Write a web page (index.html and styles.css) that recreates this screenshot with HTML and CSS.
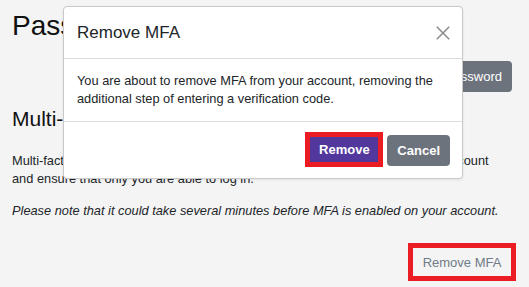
FILE: index.html
```html
<!DOCTYPE html>
<html lang="en">
<head>
<meta charset="utf-8">
<title>Remove MFA</title>
<link rel="stylesheet" href="styles.css">
</head>
<body>
<main class="page">
  <h2 class="page-title">Password</h2>
  <div class="row-end">
    <button class="btn btn-gray btn-regular" type="button">Change Password</button>
  </div>
  <h3 class="section-title">Multi-Factor Authentication</h3>
  <p class="text">Multi-factor authentication (MFA) adds an additional layer of security to your account and ensure that only you are able to log in.</p>
  <p class="text note">Please note that it could take several minutes before MFA is enabled on your account.</p>
  <div class="row-end">
    <a class="link-remove" href="#">Remove MFA</a>
  </div>
</main>

<div class="modal" role="dialog" aria-labelledby="modal-title">
  <div class="modal-header">
    <h5 class="modal-title" id="modal-title">Remove MFA</h5>
    <button class="close" type="button" aria-label="Close">
      <svg width="14" height="14" viewBox="0 0 14 14" aria-hidden="true">
        <path d="M0.8 0.8 L13.2 13.2 M13.2 0.8 L0.8 13.2" stroke="#8a8a8a" stroke-width="1.5" fill="none"/>
      </svg>
    </button>
  </div>
  <div class="modal-body">
    You are about to remove MFA from your account, removing the additional step of entering a verification code.
  </div>
  <div class="modal-footer">
    <button class="btn btn-purple" type="button">Remove</button>
    <button class="btn btn-gray" type="button">Cancel</button>
  </div>
</div>
</body>
</html>
```

FILE: styles.css
```css
* { box-sizing: border-box; }

html, body {
  margin: 0;
  padding: 0;
  background: #f4f4f4;
  font-family: "Liberation Sans", Arial, sans-serif;
  color: #212529;
}

.page {
  padding: 0 18px 0 12px;
}

.page-title {
  margin: 9px 0 0;
  font-size: 28px;
  line-height: 34px;
  font-weight: 400;
  color: #111;
}

.row-end {
  display: flex;
  justify-content: flex-end;
}

.page-title + .row-end {
  margin-top: 18px;
  margin-right: -1px;
}

.section-title {
  margin: 14px 0 0;
  font-size: 21px;
  line-height: 26px;
  font-weight: 400;
  color: #111;
}

.text {
  margin: 20px 0 0;
  font-size: 12.8px;
  line-height: 18px;
}

.note {
  margin-top: 14px;
  font-style: italic;
}

.note + .row-end {
  margin-top: 23px;
}

.btn {
  display: inline-flex;
  align-items: center;
  justify-content: center;
  height: 31px;
  padding: 0 10px;
  border: 0;
  border-radius: 4px;
  font-family: "Liberation Sans", Arial, sans-serif;
  font-size: 13px;
  font-weight: 700;
  color: #fff;
  cursor: pointer;
}

.btn-gray {
  background: #6c737d;
}

.btn-regular {
  font-weight: 400;
}

.btn-purple {
  width: 78px;
  height: 35px;
  margin: -3px 0 -1px;
  border: 5px solid #ec1c24;
  border-radius: 0;
  background: #52389d;
}

.link-remove {
  display: inline-flex;
  align-items: center;
  justify-content: center;
  width: 108px;
  height: 38px;
  margin-right: -5px;
  border: 5px solid #ec1c24;
  font-size: 13px;
  color: #6f7b88;
  text-decoration: none;
}

.modal {
  position: absolute;
  left: 63px;
  top: 6px;
  width: 400px;
  background: #fff;
  border: 1px solid #c9c9c9;
  border-radius: 4px;
  box-shadow: 0 1px 3px rgba(0, 0, 0, 0.08);
}

.modal-header {
  display: flex;
  align-items: center;
  justify-content: space-between;
  padding: 13px 12px 13px 13px;
  border-bottom: 1px solid #dedede;
}

.modal-title {
  margin: 0;
  font-size: 17px;
  line-height: 25px;
  font-weight: 400;
  color: #212529;
}

.close {
  display: flex;
  padding: 0;
  margin: 0;
  border: 0;
  background: none;
  cursor: pointer;
}

.modal-body {
  padding: 13px;
  font-size: 12.8px;
  line-height: 18px;
}

.modal-footer {
  display: flex;
  justify-content: flex-end;
  align-items: center;
  gap: 4px;
  padding: 13px 12px 12px;
  border-top: 1px solid #dedede;
}
```
